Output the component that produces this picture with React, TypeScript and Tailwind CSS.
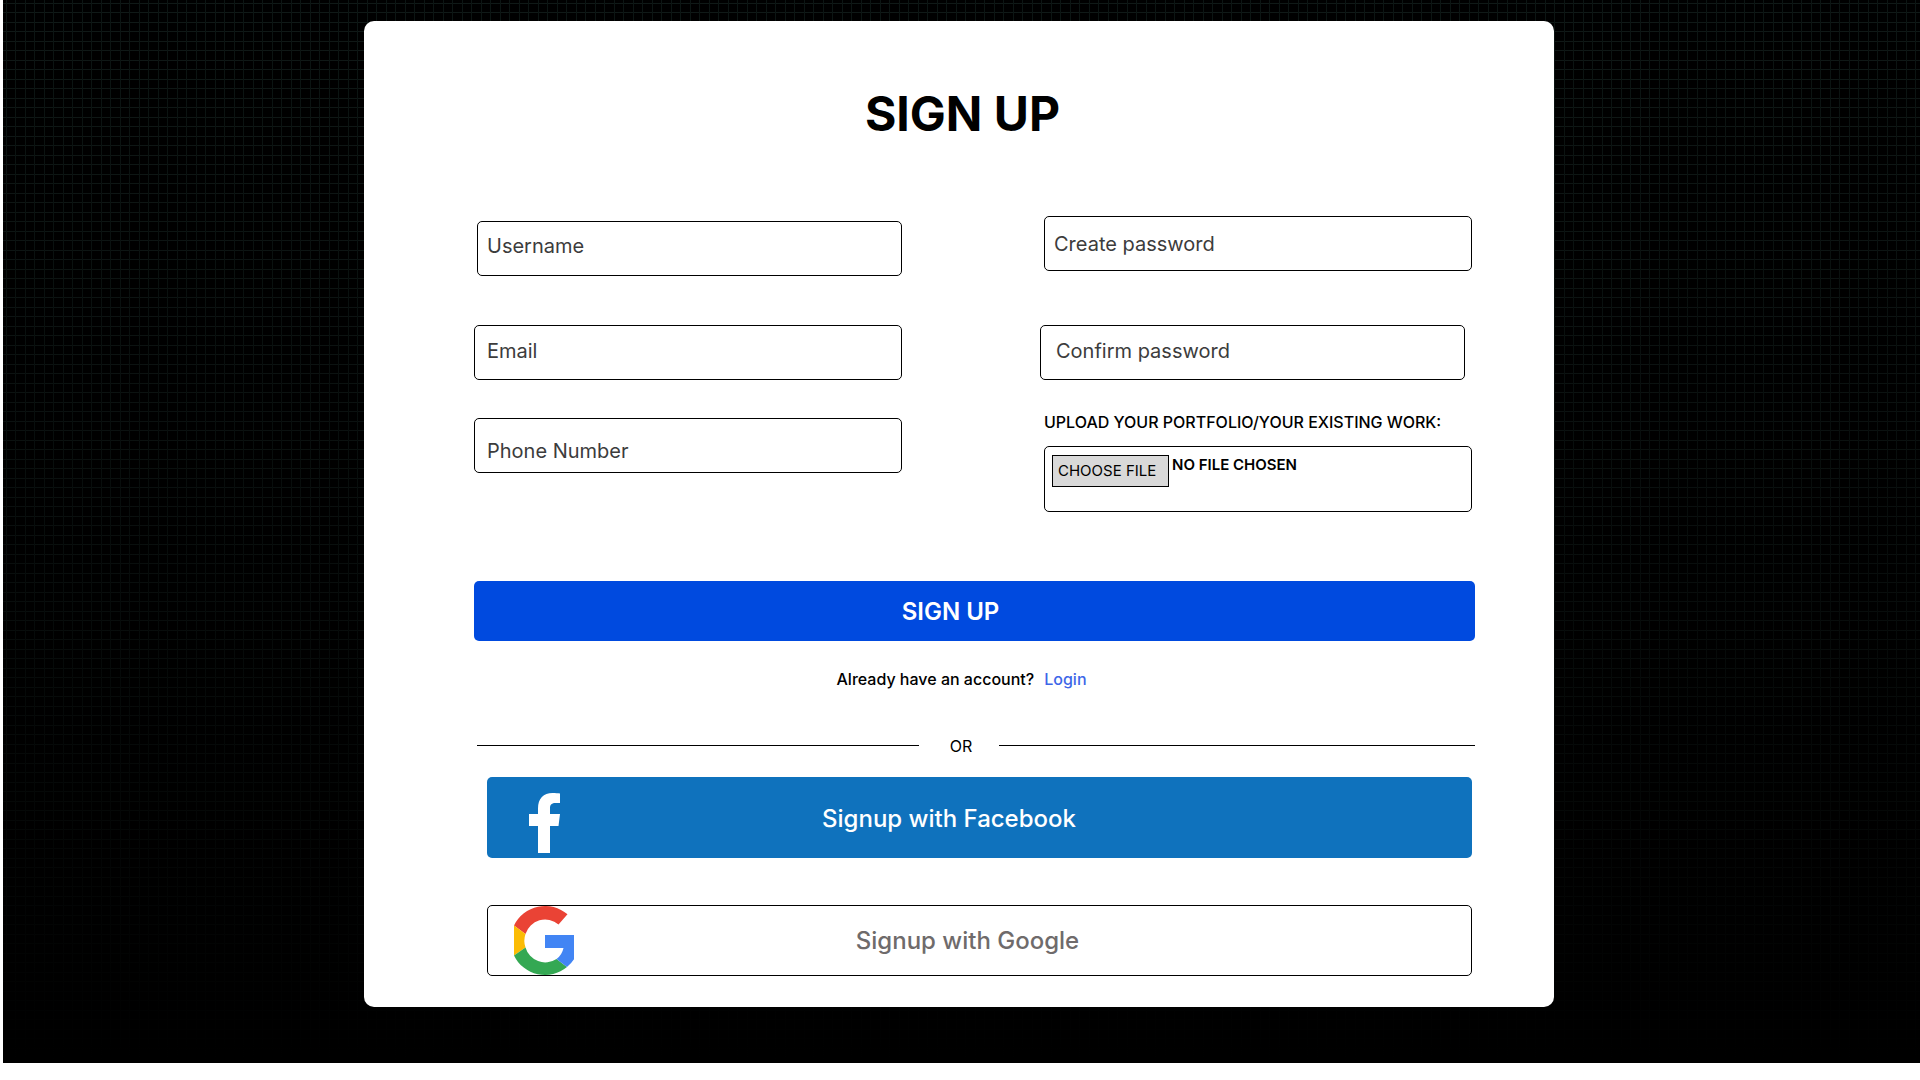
import type { ReactNode } from "react";

const fieldClass =
  "block h-[55px] rounded-[5px] border border-black bg-white text-xl text-[#3c3c3c] outline-none placeholder:text-[#3c3c3c] placeholder:opacity-100";

function Field({ id, label, type = "text", className }: { id: string; label: string; type?: string; className: string }) {
  return <input id={id} name={id} type={type} aria-label={label} placeholder={label} className={`${fieldClass} ${className}`} />;
}

function SocialButton({ icon, children, className }: { icon: ReactNode; children: ReactNode; className: string }) {
  return (
    <button type="button" className={`flex items-center rounded-[5px] text-2xl font-medium ${className}`}>
      {icon}
      <span className="flex-1 text-center">{children}</span>
    </button>
  );
}

function FacebookIcon() {
  return (
    <svg viewBox="0 0 31 60" className="mt-2 h-[60px] w-[31px] shrink-0" fill="currentColor" aria-hidden="true">
      <path d="M9 60V33H0V21H9V15.500C9 5.500 14.500 0 23.500 0C26.500 0 29 .2 31 .5V10H26.500C22 10 21 12.300 21 15.500V21H31L29.500 33H21V60Z" />
    </svg>
  );
}

function GoogleIcon() {
  return (
    <svg viewBox="0 0 60 69" className="h-[69px] w-[60px] shrink-0" aria-hidden="true">
      <path fill="#EA4335" d="M53.500 8.350A34.500 34.500 0 0 0 0 19.400L11.500 28A20.500 20.500 0 0 1 44.500 18.500Z" />
      <path fill="#FBBC05" d="M0 19.400V49.600L11.500 41.500A20.500 20.500 0 0 1 11.500 28Z" />
      <path fill="#34A853" d="M0 49.600A34.500 34.500 0 0 0 53 61L42.500 53A20.500 20.500 0 0 1 11.500 41.500Z" />
      <path fill="#4285F4" d="M31 29H60V53.200A34.500 34.500 0 0 1 53 61L42.500 53Q48 49 49.500 42H31Z" />
    </svg>
  );
}

export default function App() {
  return (
    <div className="min-h-screen bg-white pl-[3px] font-['Inter',sans-serif] text-black">
      <main className="bg-black bg-[linear-gradient(to_bottom,transparent_0%,rgba(0,0,0,0.4)_50%,rgba(0,0,0,0.8)_85%,#000_100%),repeating-linear-gradient(90deg,transparent_0px,transparent_3px,#0c1513_3px,#0c1513_4px,transparent_4px,transparent_12px,#0c1513_12px,#0c1513_13px,transparent_13px,transparent_19px),repeating-linear-gradient(180deg,transparent_0px,transparent_3px,#101917_3px,#101917_4px,transparent_4px,transparent_12px,#101917_12px,#101917_13px,transparent_13px,transparent_19px)] pt-[21px] pr-[5px] pb-14">
        <section className="mx-auto max-w-[1190px] rounded-[10px] bg-white pt-[65px] pr-[79px] pb-[31px] pl-[110px]">
          <h1 className="pr-6 text-center text-5xl leading-14 font-bold">SIGN UP</h1>

          <form>
            <div className="mt-[74px] grid grid-cols-[428fr_435fr] gap-x-[138px]">
              <div className="flex flex-col pt-[5px]">
                <Field id="username" label="Username" className="ml-[3px] pb-1.5 pl-[9px]" />
                <Field id="email" label="Email" type="email" className="mt-[49px] pb-1 pl-3" />
                <Field id="phone" label="Phone Number" type="tel" className="mt-[38px] pt-2.5 pl-3" />
              </div>
              <div className="flex flex-col">
                <Field id="password" label="Create password" type="password" className="mr-[3px] ml-1 pl-[9px]" />
                <Field id="confirm" label="Confirm password" type="password" className="mt-[54px] mr-2.5 pb-1 pl-[15px]" />
                <div className="mt-[30px] mr-[3px] ml-1">
                  <p id="portfolio-title" className="text-base leading-6 font-medium">
                    UPLOAD YOUR PORTFOLIO/YOUR EXISTING WORK:
                  </p>
                  <div className="mt-3 flex h-[66px] items-start gap-[3px] rounded-[5px] border border-black pt-2 pl-[7px]">
                    <label className="relative flex h-8 w-[117px] items-center border border-black bg-[#d9d9d9] pl-[5px] text-[15px]">
                      CHOOSE FILE
                      <input
                        type="file"
                        aria-describedby="portfolio-title"
                        className="absolute inset-0 cursor-pointer text-[0px] opacity-0 file:text-[0px]"
                      />
                    </label>
                    <span className="text-[15px] leading-5 font-semibold">NO FILE CHOSEN</span>
                  </div>
                </div>
              </div>
            </div>

            <button type="submit" className="mt-[69px] block h-[60px] w-full rounded-[5px] bg-[#004adf] pt-0.5 pr-12 text-center text-2xl font-semibold text-white">
              SIGN UP
            </button>
          </form>

          <p className="mt-[26px] flex justify-center gap-2.5 pr-[26px] text-base leading-6 font-medium">
            <span>Already have an account?</span>
            <a href="#login" className="text-[#3d66e8]">Login</a>
          </p>

          <div className="mt-[43px] flex items-center pl-[3px] text-base leading-6">
            <div className="mb-px h-px grow-[442] bg-black" />
            <span className="w-20 pl-1 text-center">OR</span>
            <div className="mb-px h-px grow-[476] bg-black" />
          </div>

          <div className="mt-[19px] mr-[3px] ml-[13px] flex flex-col gap-[47px]">
            <SocialButton icon={<FacebookIcon />} className="h-[81px] bg-[#0f72bd] pt-0.5 pr-[134px] pl-[42px] text-white">
              Signup with Facebook
            </SocialButton>
            <SocialButton icon={<GoogleIcon />} className="h-[71px] border border-black bg-white pr-[110px] pl-[26px] text-[#6f6b6b]">
              Signup with Google
            </SocialButton>
          </div>
        </section>
      </main>
    </div>
  );
}
